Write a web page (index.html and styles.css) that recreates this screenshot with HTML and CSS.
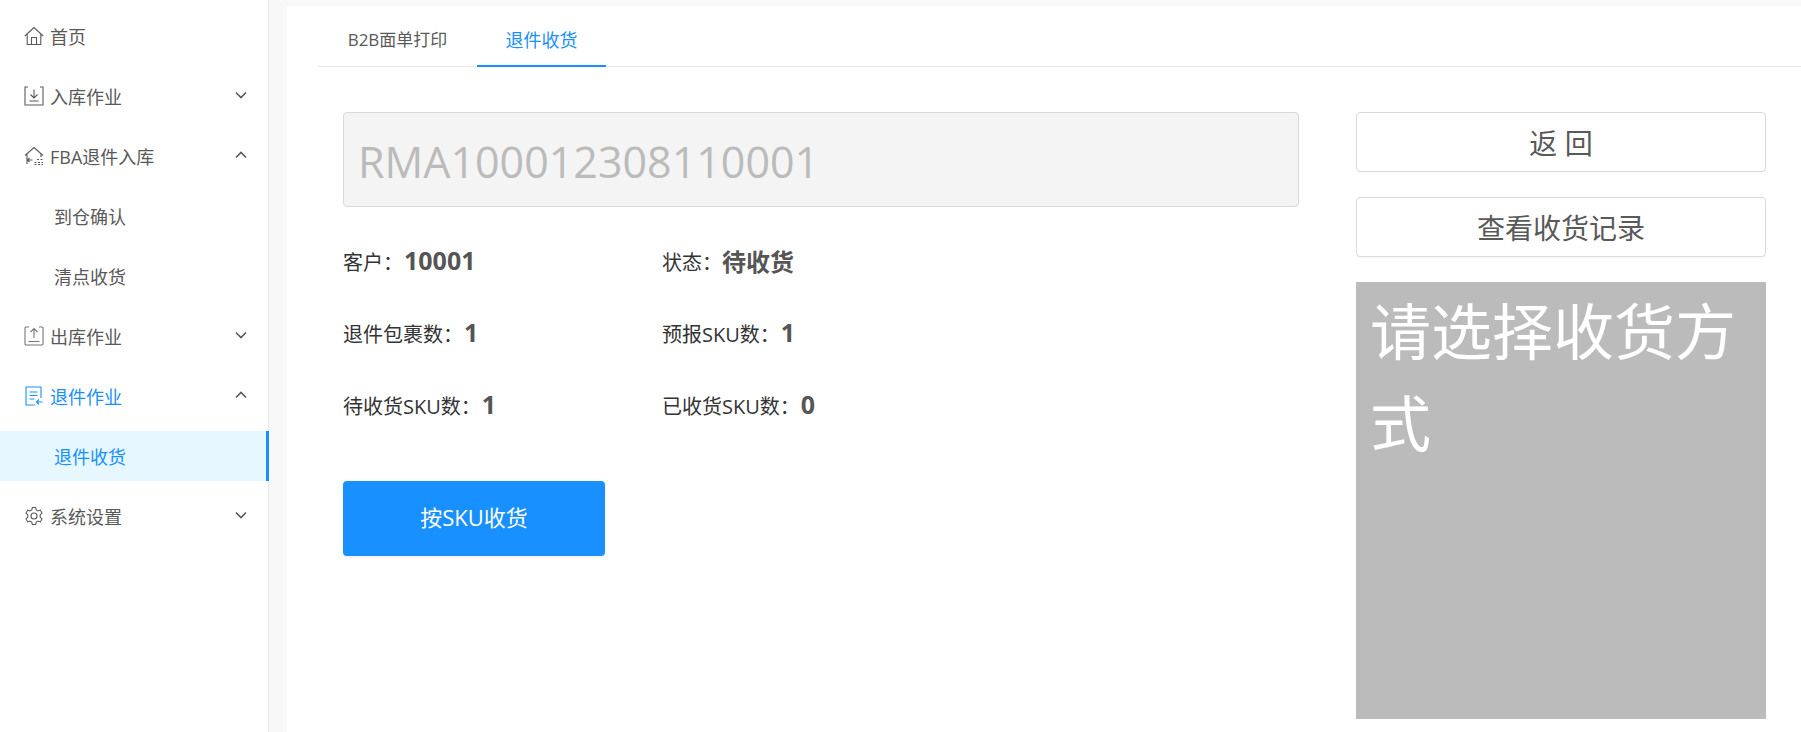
FILE: index.html
```html
<!DOCTYPE html>
<html lang="zh-CN">
<head>
<meta charset="utf-8">
<title>退件收货</title>
<link rel="stylesheet" href="styles.css">
</head>
<body>
<div class="app">
  <aside class="sidebar">
    <a class="item"><svg class="ico" viewBox="0 0 20 20"><path d="M.8 10 10 1.500 19.200 10M3.200 8v10.500h13.600V8M7.500 18.500v-7h5v7"/></svg><span>首页</span></a>
    <a class="item"><svg class="ico" viewBox="0 0 20 20"><path d="M4 1H1v18h18V1h-3M10 3.500V12M6.500 8.500 10 12l3.500-3.500M5.500 15h9"/></svg><span>入库作业</span><svg class="chev" viewBox="0 0 12 8"><path d="M1 1.500 6 6.500l5-5"/></svg></a>
    <a class="item"><svg class="ico" viewBox="0 0 20 20"><path d="M1 9.500 10 1.500l9 8M3 8v10M17 8v3M3.500 14h5M5.500 12l-2 2 2 2M10.500 16.500h2M14 16.500h2M17.500 16.500h1.500M13 13.500h2M16.500 13.500h2M10.500 18.500h2M14 18.500h2M17.500 18.500h1.500"/></svg><span>FBA退件入库</span><svg class="chev" viewBox="0 0 12 8"><path d="M1 6.500 6 1.500l5 5"/></svg></a>
    <a class="item sub"><span>到仓确认</span></a>
    <a class="item sub"><span>清点收货</span></a>
    <a class="item"><svg class="ico ico-soft" viewBox="0 0 20 20"><path d="M5 1H2q-1 0-1 1v16q0 1 1 1h16q1 0 1-1V2q0-1-1-1h-3M10 12V2.500M6.500 6 10 2.500 13.500 6M4.500 15.500h11"/></svg><span>出库作业</span><svg class="chev" viewBox="0 0 12 8"><path d="M1 1.500 6 6.500l5-5"/></svg></a>
    <a class="item open"><svg class="ico" viewBox="0 0 20 20"><path d="M17 12V1H2v18h9M5.500 6h8M5.500 9.500h8M5.500 13h5M18.500 16H12.500M15 13.500 12.500 16l2.500 2.500"/></svg><span>退件作业</span><svg class="chev" viewBox="0 0 12 8"><path d="M1 6.500 6 1.500l5 5"/></svg></a>
    <a class="item sub active"><span>退件收货</span></a>
    <a class="item"><svg class="ico" viewBox="0 0 20 20"><path d="M8.300 1.500h3.400l.5 2.400 1.800 1 2.300-.8 1.700 3-1.800 1.600v2.600l1.800 1.600-1.700 3-2.300-.8-1.800 1-.5 2.400H8.300l-.5-2.400-1.800-1-2.300.8-1.700-3 1.800-1.600V8.700L2 7.100l1.700-3 2.300.8 1.800-1z"/><circle cx="10" cy="10" r="3"/></svg><span>系统设置</span><svg class="chev" viewBox="0 0 12 8"><path d="M1 1.500 6 6.500l5-5"/></svg></a>
  </aside>
  <main class="main">
    <nav class="tabs">
      <a class="tab first">B2B面单打印</a>
      <a class="tab current">退件收货</a>
    </nav>
    <div class="body">
      <section class="left">
        <input class="scan" type="text" disabled value="RMA100012308110001">
        <div class="info">
          <div class="cell">客户：<b>10001</b></div>
          <div class="cell">状态：<b class="word">待收货</b></div>
          <div class="cell">退件包裹数：<b>1</b></div>
          <div class="cell">预报SKU数：<b>1</b></div>
          <div class="cell">待收货SKU数：<b>1</b></div>
          <div class="cell">已收货SKU数：<b>0</b></div>
        </div>
        <button class="primary" type="button">按SKU收货</button>
      </section>
      <section class="right">
        <button class="ghost" type="button">返 回</button>
        <button class="ghost" type="button">查看收货记录</button>
        <div class="hint">请选择收货方式</div>
      </section>
    </div>
  </main>
</div>
</body>
</html>
```
FILE: styles.css
```css
* { box-sizing: border-box; }
html, body { margin: 0; height: 100%; }
body {
  font-family: "Open Sans", "Noto Sans CJK SC", sans-serif;
  background: #f8f8f8;
  color: #333;
  overflow: hidden;
}
.app { display: flex; height: 732px; }
.sidebar {
  width: 269px;
  flex: none;
  background: #fff;
  border-right: 1px solid #e8e8e8;
  padding-top: 11px;
}
.item {
  display: flex;
  align-items: center;
  height: 50px;
  margin-bottom: 10px;
  padding: 0 21px 0 24px;
  font-size: 18px;
  color: #595959;
}
.item span { flex: 1; margin-left: 6px; }
.ico {
  width: 20px;
  height: 20px;
  flex: none;
  fill: none;
  stroke: currentColor;
  stroke-width: 1.1;
}
.ico-soft { stroke: #777; }
.chev {
  width: 12px;
  height: 8px;
  flex: none;
  fill: none;
  stroke: #595959;
  stroke-width: 1.6;
  margin-top: -3px;
}
.sub { padding-left: 54px; }
.sub span { margin-left: 0; }
.open { color: #1890ff; }
.active {
  color: #1890ff;
  background: #e6f7ff;
  border-right: 3px solid #1890ff;
  margin-right: -1px;
  position: relative;
}
.main {
  flex: 1;
  margin: 6px 0 0 18px;
  background: #fff;
  padding-left: 31px;
  min-width: 0;
}
.tabs {
  display: flex;
  height: 61px;
  border-bottom: 1px solid #e8e8e8;
}
.tab {
  height: 61px;
  width: 159px;
  padding-top: 9px;
  text-align: center;
  font-size: 18px;
  line-height: 50px;
  white-space: nowrap;
  color: #595959;
}
.tab.first { font-size: 17px; }
.tab.current {
  color: #1890ff;
  width: 129px;
  border-bottom: 2px solid #1890ff;
}
.body {
  display: flex;
  padding: 45px 35px 0 25px;
}
.left { width: 956px; flex: none; }
.scan {
  display: block;
  width: 100%;
  height: 95px;
  padding: 3px 14px 0;
  font: 43px "Open Sans", "Noto Sans CJK SC", sans-serif;
  color: #bbb;
  -webkit-text-fill-color: #bbb;
  background: #f4f4f4;
  border: 1px solid #d9d9d9;
  border-radius: 4px;
  opacity: 1;
}
.info {
  display: grid;
  grid-template-columns: 319px 1fr;
  grid-auto-rows: 72px;
  margin-top: 18px;
  font-size: 20px;
  color: #333;
}
.cell { display: flex; align-items: center; white-space: nowrap; }
.cell b { font-size: 25px; font-weight: 700; color: #555; margin-left: 1px; margin-top: -2px; }
.cell b.word { font-size: 24px; margin-left: 0; }
.primary {
  display: block;
  width: 262px;
  height: 75px;
  margin-top: 40px;
  padding-bottom: 6px;
  border: 0;
  border-radius: 4px;
  background: #1890ff;
  color: #fff;
  font: 22px "Open Sans", "Noto Sans CJK SC", sans-serif;
  box-shadow: 0 2px 0 rgba(0,0,0,.045);
}
.right {
  width: 410px;
  margin-left: 57px;
  flex: none;
  display: flex;
  flex-direction: column;
  gap: 25px;
}
.ghost {
  height: 60px;
  background: #fff;
  border: 1px solid #d9d9d9;
  border-radius: 4px;
  font: 28px "Open Sans", "Noto Sans CJK SC", sans-serif;
  color: #595959;
  box-shadow: 0 2px 0 rgba(0,0,0,.015);
}
.hint {
  height: 437px;
  background: #bbb;
  color: #fff;
  font-size: 61px;
  line-height: 92px;
  padding: 4px 14px;
}
```
